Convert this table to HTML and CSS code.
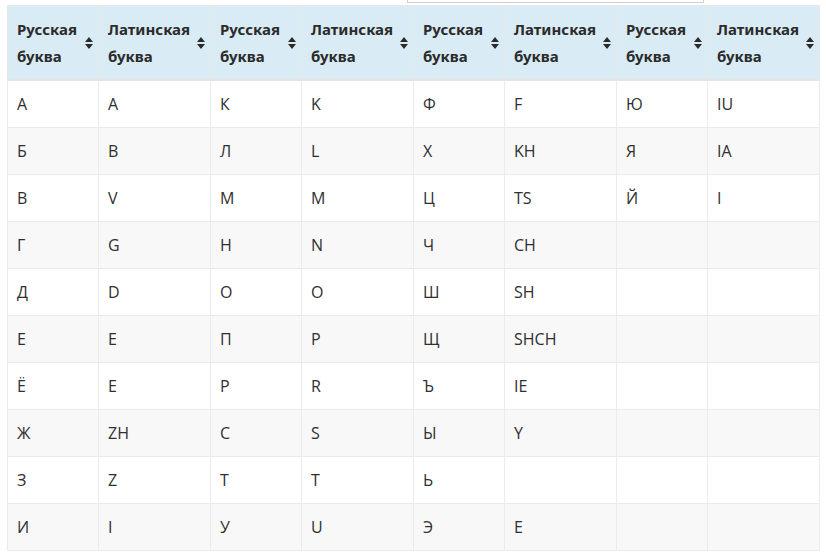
FILE: index.html
```html
<!DOCTYPE html>
<html lang="ru">
<head>
<meta charset="utf-8">
<link rel="stylesheet" href="styles.css">
</head>
<body>
<div class="toolbar"><div class="search"></div></div>
<table class="translit">
<colgroup>
<col class="c-ru"><col class="c-la"><col class="c-ru"><col class="c-la"><col class="c-ru"><col class="c-la"><col class="c-ru"><col class="c-la">
</colgroup>
<thead>
<tr>
<th>Русская буква<svg class="sort" viewBox="0 0 8 12"><path d="M4 0L8 5H0Z M4 12L8 7H0Z"/></svg></th>
<th>Латинская буква<svg class="sort" viewBox="0 0 8 12"><path d="M4 0L8 5H0Z M4 12L8 7H0Z"/></svg></th>
<th>Русская буква<svg class="sort" viewBox="0 0 8 12"><path d="M4 0L8 5H0Z M4 12L8 7H0Z"/></svg></th>
<th>Латинская буква<svg class="sort" viewBox="0 0 8 12"><path d="M4 0L8 5H0Z M4 12L8 7H0Z"/></svg></th>
<th>Русская буква<svg class="sort" viewBox="0 0 8 12"><path d="M4 0L8 5H0Z M4 12L8 7H0Z"/></svg></th>
<th>Латинская буква<svg class="sort" viewBox="0 0 8 12"><path d="M4 0L8 5H0Z M4 12L8 7H0Z"/></svg></th>
<th>Русская буква<svg class="sort" viewBox="0 0 8 12"><path d="M4 0L8 5H0Z M4 12L8 7H0Z"/></svg></th>
<th>Латинская буква<svg class="sort" viewBox="0 0 8 12"><path d="M4 0L8 5H0Z M4 12L8 7H0Z"/></svg></th>
</tr>
</thead>
<tbody>
<tr><td>А</td><td>A</td><td>К</td><td>K</td><td>Ф</td><td>F</td><td>Ю</td><td>IU</td></tr>
<tr><td>Б</td><td>B</td><td>Л</td><td>L</td><td>Х</td><td>KH</td><td>Я</td><td>IA</td></tr>
<tr><td>В</td><td>V</td><td>М</td><td>M</td><td>Ц</td><td>TS</td><td>Й</td><td>I</td></tr>
<tr><td>Г</td><td>G</td><td>Н</td><td>N</td><td>Ч</td><td>CH</td><td></td><td></td></tr>
<tr><td>Д</td><td>D</td><td>О</td><td>O</td><td>Ш</td><td>SH</td><td></td><td></td></tr>
<tr><td>Е</td><td>E</td><td>П</td><td>P</td><td>Щ</td><td>SHCH</td><td></td><td></td></tr>
<tr><td>Ё</td><td>E</td><td>Р</td><td>R</td><td>Ъ</td><td>IE</td><td></td><td></td></tr>
<tr><td>Ж</td><td>ZH</td><td>С</td><td>S</td><td>Ы</td><td>Y</td><td></td><td></td></tr>
<tr><td>З</td><td>Z</td><td>Т</td><td>T</td><td>Ь</td><td></td><td></td><td></td></tr>
<tr><td>И</td><td>I</td><td>У</td><td>U</td><td>Э</td><td>E</td><td></td><td></td></tr>
</tbody>
</table>
</body>
</html>
```
FILE: styles.css
```css
html, body {
  margin: 0;
  padding: 0;
  background: #fff;
}
body {
  font-family: "Noto Sans", "Open Sans", sans-serif;
  color: #333;
  padding: 0 7px;
}
.toolbar {
  height: 5px;
  display: flex;
}
.search {
  margin-left: 400px;
  width: 295px;
  height: 2px;
  border: 1px solid #cfcfcf;
  border-top: none;
}
.translit {
  border-collapse: collapse;
  table-layout: fixed;
  width: 813px;
  border: 1px solid #e8e8e8;
}
.c-ru { width: 91px; }
.c-la { width: 112px; }
.translit th {
  position: relative;
  background: #d9ebf5;
  text-align: left;
  vertical-align: middle;
  font-size: 15px;
  font-weight: 700;
  line-height: 27px;
  padding: 10px 24px 9px 9px;
  border: 1px solid #e8e8e8;
  border-bottom: 2px solid #e4e4e4;
  height: 54px;
  color: #2b2b2b;
}
.sort {
  position: absolute;
  right: 5px;
  top: 50%;
  width: 8px;
  height: 12px;
  margin-top: -6px;
  fill: #2b2b2b;
}
.translit td {
  font-family: "Open Sans", "Noto Sans", sans-serif;
  font-size: 16px;
  line-height: 20px;
  padding: 13px 9px 13px 9px;
  height: 20px;
  border: 1px solid #ebebeb;
  color: #2f2f2f;
}
.translit tbody tr:nth-child(even) td {
  background: #f8f8f8;
}
```
